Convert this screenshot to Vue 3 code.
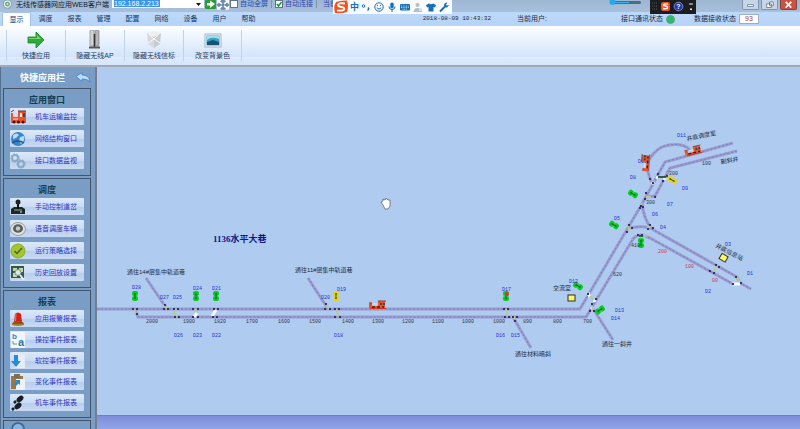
<script setup>
import { ref } from 'vue'

const tabs = ['显示', '调度', '报表', '管理', '配置', '网络', '设备', '用户', '帮助']
const activeTab = ref('显示')
const address = ref('192.168.2.213')
const autoFull = ref(false)
const autoConnect = ref(true)
const received = ref('93')

const ribbon = [
  { label: '快捷应用', icon: 'arrow' },
  { label: '隐藏无线AP', icon: 'ap' },
  { label: '隐藏无线信标', icon: 'cube' },
  { label: '改变背景色', icon: 'image' }
]

const panels = [
  {
    title: '应用窗口',
    items: [
      { label: '机车运输监控', icon: 'loco' },
      { label: '网络结构窗口', icon: 'globe' },
      { label: '接口数据监视', icon: 'gears' }
    ]
  },
  {
    title: '调度',
    items: [
      { label: '手动控制道岔', icon: 'joystick' },
      { label: '语音调度车辆', icon: 'speaker' },
      { label: '运行策略选择', icon: 'check' },
      { label: '历史回放设置', icon: 'history' }
    ]
  },
  {
    title: '报表',
    dense: true,
    items: [
      { label: '应用报警报表', icon: 'alarm' },
      { label: '操控事件报表', icon: 'letters' },
      { label: '软控事件报表', icon: 'download' },
      { label: '变化事件报表', icon: 'paste' },
      { label: '机车事件报表', icon: 'steps' }
    ]
  }
]

const tracks = [
  'M97 309H580L642 204L665 162L733 143',
  'M135 309L138 317H586L633 239Q636 235 643 235L650 238L733 284',
  'M737 151L670 168L655 196L646 197',
  'M628 229Q638 225 650 228L737 277L740 283L751 289',
  'M642 204Q644 219 651 228',
  'M652 183Q645 169 649 160Q656 147 669 145Q684 143 690 150',
  'M146 278L167 309',
  'M308 278L328 309',
  'M513 317L531 348',
  'M592 307L613 340'
]

const crossings = [
  { d: 'M134 309L136 313', c: 'olive' },
  { d: 'M163 305L168 309', c: 'olive' },
  { d: 'M176 309L174 313L177 317', c: 'olive' },
  { d: 'M195 309L197 313', c: 'olive' },
  { d: 'M197 313L194 317', c: 'white' },
  { d: 'M216 310L212 316', c: 'white' },
  { d: 'M325 304L329 309', c: 'olive' },
  { d: 'M336 309L339 317', c: 'olive' },
  { d: 'M506 309L508 317', c: 'olive' },
  { d: 'M511 317L514 317L514 319', c: 'olive' },
  { d: 'M588 293L590 297M594 299L595 302M591 307L593 309', c: 'white' },
  { d: 'M590 296L594 300M592 307L594 311', c: 'olive' },
  { d: 'M642 203L641 206M646 197L651 197M651 182L652 184', c: 'olive' },
  { d: 'M628 226L629 230L633 228M647 228L651 226M642 235L647 236', c: 'olive' },
  { d: 'M656 177L658 178M664 177L665 180M652 182L654 184', c: 'white' },
  { d: 'M717 265L714 272M737 277L740 283', c: 'olive' },
  { d: 'M732 284L740 284', c: 'white' }
]

const joints = [
  [133, 309], [137, 309], [137, 314], [164, 309], [168, 309], [165, 305], [174, 309], [178, 309], [175, 317], [179, 317],
  [193, 309], [198, 309], [193, 317], [198, 317], [214, 309], [218, 309], [213, 317], [217, 317],
  [325, 309], [330, 309], [326, 304], [335, 309], [339, 309], [335, 317], [340, 317],
  [504, 309], [508, 309], [505, 317], [509, 317], [513, 317], [517, 317], [515, 321],
  [588, 294], [596, 299], [592, 304], [594, 311], [590, 311],
  [641, 206], [646, 193], [645, 199], [655, 197], [650, 179], [653, 183], [658, 174], [663, 181], [667, 176],
  [627, 232], [629, 225], [632, 228], [648, 229], [653, 228], [650, 225], [640, 208], [643, 207],
  [638, 235], [642, 235], [716, 265], [719, 267], [710, 271], [714, 273], [736, 277], [741, 283], [733, 284]
]

const signals = [
  { x: 135, y: 296, r: 0, c: 'clear' }, { x: 196, y: 296, r: 0, c: 'clear' }, { x: 216, y: 296, r: 0, c: 'clear' },
  { x: 336, y: 296, r: 0, c: 'warn' }, { x: 506, y: 296, r: 0, c: 'clear', alert: true },
  { x: 578, y: 286, r: 120, c: 'clear' }, { x: 600, y: 310, r: 55, c: 'clear' }, { x: 641, y: 243, r: 0, c: 'clear' },
  { x: 614, y: 225, r: 120, c: 'clear' }, { x: 633, y: 194, r: 120, c: 'clear' }, { x: 672, y: 180, r: 120, c: 'warn' }
]

const switches = [
  ['D28', 132, 289], ['D27', 160, 299], ['D25', 173, 299], ['D24', 193, 290], ['D21', 212, 290],
  ['D26', 174, 337], ['D23', 193, 337], ['D22', 212, 337], ['D20', 321, 299], ['D19', 337, 291], ['D18', 334, 337],
  ['D17', 502, 291], ['D16', 496, 337], ['D15', 511, 337], ['D12', 569, 283], ['D13', 615, 312], ['D14', 611, 320],
  ['D11', 677, 137], ['D10', 638, 163], ['D8', 630, 179], ['D9', 682, 190], ['D7', 667, 206], ['D6', 652, 216],
  ['D5', 614, 220], ['D4', 660, 229], ['D3', 725, 246], ['D1', 747, 275], ['D2', 705, 293]
]

const distances = [
  ['2000', 146, 323], ['1900', 183, 323], ['1820', 214, 323], ['1700', 246, 323], ['1600', 278, 323], ['1500', 309, 323],
  ['1400', 342, 323], ['1300', 372, 323], ['1200', 402, 323], ['1100', 432, 323], ['1000', 462, 323], ['1000', 493, 323],
  ['890', 523, 323], ['800', 553, 323], ['700', 583, 323], ['620', 613, 276], ['410', 631, 247],
  ['300', 646, 204], ['200', 669, 175], ['100', 702, 165]
]

const redDistances = [['200', 658, 253], ['100', 685, 268], ['00', 712, 282]]

const places = [
  { t: '通往14#层集中轨道巷', x: 127, y: 274, r: 0 }, { t: '通往11#层集中轨道巷', x: 295, y: 272, r: 0 },
  { t: '交流室', x: 553, y: 290, r: 0 }, { t: '通往材料暗斜', x: 515, y: 356, r: 0 }, { t: '通往一斜井', x: 602, y: 346, r: 0 },
  { t: '井底调度室', x: 687, y: 141, r: -12 }, { t: '副斜井', x: 721, y: 164, r: -10 }, { t: '井底信息站', x: 715, y: 247, r: 27 }
]
</script>

<template>
  <div class="app">
    <header class="titlebar">
      <svg class="logo" viewBox="0 0 10 10"><circle cx="5" cy="4" r="4.5" fill="#e8f2ee" stroke="#789a99" /><circle cx="5" cy="4" r="2" fill="none" stroke="#58a27a" stroke-width="1.5" /><path d="M5 4L8 7" stroke="#8aaab4" /></svg>
      <h1>无线传感器网应用WEB客户端</h1>
      <div class="address">
        <input v-model="address" class="address-input" aria-label="地址">
        <button class="plain drop" aria-label="展开"><svg viewBox="0 0 5 3"><path d="M0 0H5L2.500 3Z" fill="#111" /></svg></button>
      </div>
      <button class="plain go" aria-label="连接"><svg viewBox="0 0 11 10"><rect width="11" height="9" rx="1" fill="#2b9b35" /><path d="M2 3H5V0.500L10 4L5 8V5.500H2Z" fill="#f4fff0" /></svg></button>
      <button class="plain full" aria-label="全屏"><svg viewBox="0 0 11 10"><rect width="11" height="9" fill="#6f8ba8" /><path d="M0 4V0H4ZM11 4V0H7ZM0 5V9H4ZM11 5V9H7Z" fill="#fff" /><path d="M1 1L4.500 3.500M10 1L6.500 3.500M1 8L4.500 5.500M10 8L6.500 5.500" stroke="#fff" stroke-width="1.500" /></svg></button>
      <label class="toggle"><input v-model="autoFull" type="checkbox"><span>自动全屏</span></label>
      <label class="toggle"><input v-model="autoConnect" type="checkbox"><svg v-if="autoConnect" class="tick" viewBox="0 0 8 8"><path d="M2 4L3.500 6L6.500 2" fill="none" stroke="#1c9430" stroke-width="1.500" /></svg><span>自动连接</span></label>
      <span class="toggle current">当前</span>
      <div class="window-buttons">
        <button aria-label="最小化"><svg viewBox="0 0 16 8"><rect x="5" y="4" width="6" height="2" fill="#fff" stroke="#596879" stroke-width=".7" /></svg></button>
        <button aria-label="还原"><svg viewBox="0 0 16 8"><path d="M8 1H12V5H8ZM5 3H10V7H5Z" fill="#fff" stroke="#596879" stroke-width=".8" /></svg></button>
        <button class="close" aria-label="关闭"><svg viewBox="0 0 16 8"><path d="M5 1L11 7M11 1L5 7" stroke="#fff" stroke-width="1.800" /></svg></button>
      </div>

      <div class="ime">
        <svg viewBox="0 0 16 14"><path d="M3 2Q8 0 14 0.500Q16 6 14 12Q8 14 2 13Q0 7 3 2Z" fill="#f4511e" /><path d="M12 3.500Q5 2.500 5 5Q5 6.500 8.500 7Q12 7.500 11 9.500Q10 11 4 10.500" fill="none" stroke="#fff" stroke-width="2" /></svg>
        <span class="ime-lang">中</span>
        <svg viewBox="0 0 12 12"><circle cx="3.500" cy="5" r="1.300" fill="none" stroke="#1670b8" /><path d="M8 6.500Q9.500 8 7.500 9.500" fill="none" stroke="#1670b8" stroke-width="1.500" /></svg>
        <svg viewBox="0 0 12 12"><circle cx="6" cy="6" r="4.200" fill="none" stroke="#1670b8" /><path d="M3.800 6.800Q6 9.500 8.200 6.800M4.500 4V5M7.500 4V5" fill="none" stroke="#1670b8" /></svg>
        <svg viewBox="0 0 12 12"><rect x="4.300" y="1.500" width="3.400" height="6" rx="1.700" fill="#1670b8" /><path d="M3 5.500Q3 8.500 6 8.500Q9 8.500 9 5.500M6 8.500V11" fill="none" stroke="#1670b8" /></svg>
        <svg viewBox="0 0 12 12"><rect x="1" y="3" width="10" height="6.500" rx="1" fill="#1670b8" /><path d="M2 5H10M2 6.600H10M3.500 8.200H8.500" stroke="#fff" stroke-width=".7" stroke-dasharray="1 .7" /></svg>
        <svg viewBox="0 0 12 12"><circle cx="5.500" cy="4" r="2" fill="#b5bdc6" /><path d="M1.500 11Q2 6.500 6 7L10 8V11Z" fill="#b5bdc6" /><path d="M7 9H11" stroke="#fff" /></svg>
        <svg viewBox="0 0 12 12"><path d="M4 2.500Q6 4 8 2.500L11 4L10 6.500L8.500 6V10.500H3.500V6L2 6.500L1 4Z" fill="#1670b8" /></svg>
        <svg viewBox="0 0 12 12"><path d="M2 10.500L7 5.500" stroke="#1670b8" stroke-width="2" /><path d="M9.500 1.500Q6 1.500 6 4.500Q6.500 7 9 6.500L11 4L8.500 4.500L8 3.500Z" fill="#1670b8" /></svg>
      </div>
      <svg class="volume" viewBox="0 0 32 6"><rect x="2" y="1" width="30" height="3" rx="1.500" fill="#506a7e" /><path d="M4 2.500H20" stroke="#36b4f0" /><circle cx="3.500" cy="2" r="3" fill="#27a8e8" /></svg>
      <svg class="recorder" viewBox="0 0 46 14"><rect width="46" height="14" fill="#1c1d20" /><path d="M2 3H7M2 6H7M2 9H7" stroke="#555" stroke-dasharray="1 1" /><rect x="11" y="2" width="9" height="9" rx="2" fill="#f4511e" /><path d="M18 4Q13 3.500 13.500 5.500Q18 6 17.500 8Q16 9.500 13 8.500" fill="none" stroke="#fff" stroke-width="1.400" /><circle cx="28.500" cy="6.500" r="4.300" fill="#1934b8" stroke="#c0cbed" stroke-width=".6" /><text x="28.500" y="9" fill="#fff" font-size="7" font-weight="700" text-anchor="middle">?</text><path d="M39 4H43M40 9H42L41 10Z" stroke="#eee" fill="#eee" /></svg>
    </header>

    <div class="menubar">
      <nav class="tabs">
        <button v-for="tab in tabs" :key="tab" :class="{ active: tab === activeTab }" @click="activeTab = tab">{{ tab }}</button>
      </nav>
      <div class="status">
        <time>2018-08-09 10:43:32</time>
        <span class="user">当前用户:</span>
        <span class="link-state">接口通讯状态<i class="lamp"></i></span>
        <label class="receive">数据接收状态<input v-model="received"></label>
      </div>
    </div>

    <div class="ribbon">
      <button v-for="item in ribbon" :key="item.label">
        <svg viewBox="0 0 20 20">
          <g v-if="item.icon === 'arrow'"><path d="M2 7H10V2L18 10L10 18V13H2Z" fill="#2faa39" stroke="#16852a" stroke-width=".8" /><path d="M3 8H11V5L15 9H3Z" fill="#79d568" /></g>
          <g v-else-if="item.icon === 'ap'"><rect x="5" y="0" width="4" height="16" rx="1" fill="#d2d3d3" stroke="#777" stroke-width=".6" /><rect x="10" y="0" width="4" height="16" rx="1" fill="#b5b6b7" stroke="#777" stroke-width=".6" /><path d="M9.500 4V18" stroke="#333" stroke-width="1.500" /><path d="M4 17.500H15" stroke="#555" stroke-width="2" /></g>
          <g v-else-if="item.icon === 'cube'"><path d="M3 3L10 6V18L4 14Z" fill="#d8d9dc" /><path d="M10 6L17 3L16 14L10 18Z" fill="#c9cbd0" /><path d="M3 3L10 1L17 3L10 7Z" fill="#eee" /><path d="M5 4L10 9L15 4M4 13L10 9L16 13" fill="none" stroke="#fafafa" /></g>
          <g v-else><rect x="2" y="4" width="16" height="13" fill="#fafafa" stroke="#a2b4c5" /><rect x="3.500" y="5.500" width="13" height="10" fill="#37a2c8" /><path d="M4 10Q8 6 16 9V6H4Z" fill="#a7ddec" /><path d="M4 12L10 10L16 12V15H4Z" fill="#175474" /></g>
        </svg>
        <span>{{ item.label }}</span>
      </button>
    </div>

    <div class="workspace">
      <aside class="sidebar">
        <div class="sidebar-head">
          <h2>快捷应用栏</h2>
          <button class="plain back" aria-label="返回"><svg viewBox="0 0 16 12"><path d="M1 4.500L7 0.500V3Q14 2.500 15 10Q12 6.500 7 7V9.500Z" fill="#b9dcff" stroke="#4d87cf" /></svg></button>
        </div>
        <section v-for="panel in panels" :key="panel.title" class="panel" :class="{ dense: panel.dense }">
          <h3>{{ panel.title }}</h3>
          <button v-for="item in panel.items" :key="item.label">
            <svg viewBox="0 0 16 16">
              <g v-if="item.icon === 'loco'"><path d="M1 4H3V8H8V2H16V14H1Z" fill="#e8542b" /><path d="M1 3L4 1M8 2H16" stroke="#6b3b30" /><rect x="10" y="4" width="2" height="4" fill="#dfe9ee" /><rect x="13" y="4" width="2" height="4" fill="#384b55" /><path d="M3 10H8" stroke="#ffd9c8" /><circle cx="4" cy="13" r="1.500" fill="#3a1714" /><circle cx="8.500" cy="13" r="1.500" fill="#3a1714" /><circle cx="13" cy="13" r="1.500" fill="#3a1714" /></g>
              <g v-else-if="item.icon === 'globe'"><circle cx="8" cy="8" r="7" fill="#3b82c8" /><path d="M3 4Q7 1 9 4L6 7L3 8ZM10 6L14 5Q15 10 11 13L9 10Z" fill="#b8dcf6" /><path d="M2 12Q8 8 14 12" fill="none" stroke="#1c5593" stroke-width="1.500" /></g>
              <g v-else-if="item.icon === 'gears'" fill="none" stroke="#87abc5"><circle cx="5" cy="5" r="3" stroke-width="2" /><circle cx="11" cy="11" r="3" stroke-width="2" /><circle cx="5" cy="5" r="4.300" stroke-width="1" stroke-dasharray="1.500 1.500" /><circle cx="11" cy="11" r="4.300" stroke-width="1" stroke-dasharray="1.500 1.500" /></g>
              <g v-else-if="item.icon === 'joystick'"><path d="M1 10L4 8H12L15 10V15H1Z" fill="#1b2924" /><path d="M8 4V10" stroke="#111" stroke-width="2" /><circle cx="8" cy="3" r="2.500" fill="#202020" /><path d="M4 11H12" stroke="#9ba69f" /><circle cx="11" cy="13" r="1" fill="#aaa" /></g>
              <g v-else-if="item.icon === 'speaker'"><ellipse cx="8" cy="8" rx="7.500" ry="6.500" fill="#e2e2df" stroke="#999" /><ellipse cx="8" cy="7.500" rx="5" ry="4.300" fill="#595d61" /><circle cx="8" cy="7.500" r="2.200" fill="#c5c8cb" /></g>
              <g v-else-if="item.icon === 'check'"><circle cx="8" cy="8" r="7" fill="#a3c62c" stroke="#8aac2b" /><path d="M4.500 8L7 10.500L12 5" fill="none" stroke="#50603a" stroke-width="1.500" /></g>
              <g v-else-if="item.icon === 'history'"><rect x="1" y="1" width="13" height="12" fill="#35574c" /><path d="M3 3H7V6H3ZM9 3H13V7H9ZM3 8H7V12H3Z" fill="#c2dba5" /><circle cx="8" cy="7.500" r="3" fill="#dce9ea" stroke="#888" /><path d="M10 10L14 15" stroke="#eee" stroke-width="2" /></g>
              <g v-else-if="item.icon === 'alarm'"><path d="M4 11L5 3Q8 0 11 3L12 11Z" fill="#d02116" /><path d="M6 3L5.500 10" stroke="#ff7a61" /><path d="M2 12Q8 9 14 12V14Q8 16 2 14Z" fill="#b57922" /><path d="M3 12H13" stroke="#672b13" /></g>
              <g v-else-if="item.icon === 'letters'"><rect x="1" y="0" width="14" height="16" fill="#f2f6fa" /><text x="2" y="7" font-size="8" font-weight="700" fill="#3185bd">b</text><text x="8" y="14" font-size="11" font-weight="700" fill="#2378b7">a</text><path d="M3 9V12H7" fill="none" stroke="#4bb65d" /></g>
              <g v-else-if="item.icon === 'download'"><rect x="5" y="1" width="10" height="14" fill="#e6edf6" /><path d="M4 2H8V8H11L6 14L1 8H4Z" fill="#238ddb" /></g>
              <g v-else-if="item.icon === 'paste'"><rect x="1" y="2" width="12" height="13" fill="#a47547" /><rect x="4" y="0" width="6" height="4" fill="#77705f" /><rect x="6" y="5" width="9" height="11" fill="#edf3fa" /><path d="M5 6H10V11L8.500 9.500L6 12L4 10L6.500 7.500Z" fill="#288bc7" /></g>
              <g v-else fill="#171d24"><ellipse cx="10" cy="4" rx="2.500" ry="4" transform="rotate(50 10 4)" /><ellipse cx="8" cy="11" rx="2.500" ry="4" transform="rotate(50 8 11)" /><path d="M6 6L4 8M4 13L2 15" stroke="#171d24" stroke-width="2.500" /></g>
            </svg>
            <span>{{ item.label }}</span>
          </button>
        </section>
        <section class="panel last"><svg viewBox="0 0 16 16"><circle cx="8" cy="8" r="6" fill="#8bb5dc" stroke="#406c9b" stroke-width="2" /></svg></section>
      </aside>

      <main class="stage">
        <svg class="map" viewBox="97 67 703 348" preserveAspectRatio="xMinYMin meet">
          <defs>
            <g id="loco"><path d="M0 1L3 2V5H9V0H16V7H0Z" fill="#e8542b" /><path d="M1 2H3M9 0H17" stroke="#7b4a40" /><rect x="11" y="2" width="2" height="2" fill="#384b55" /><rect x="14" y="2" width="2" height="2" fill="#344b4b" /><path d="M4 3H8" stroke="#eee1dc" /><path d="M1 7.500H17" stroke="#dc3517" /><path d="M3 6H6M8 6H11M13 6H15" stroke="#421d1a" stroke-width="1.500" /></g>
          </defs>
          <g class="rail"><path v-for="d in tracks" :key="d" :d="d" /></g>
          <g class="ties"><path v-for="d in tracks" :key="d" :d="d" /></g>
          <path v-for="c in crossings" :key="c.d" :d="c.d" :class="['crossing', c.c]" />
          <path d="M658 177H666" class="crossing dark" /><path d="M639 236H643" class="crossing dark" />
          <rect v-for="(j, i) in joints" :key="i" :x="j[0] - 1" :y="j[1] - 1" width="2" height="2" class="joint" />
          <g v-for="(s, i) in signals" :key="i" :transform="`translate(${s.x} ${s.y}) rotate(${s.r})`" :class="s.c">
            <rect x="-3" y="-5" width="6" height="5" rx="2" /><rect x="-3" y="0" width="6" height="5" rx="2" />
            <path d="M0 -3V3M-1 -2H1M-1 2H1" class="signal-core" />
            <circle v-if="s.alert" cx="1" cy="-2" r="2" fill="#f32b22" />
          </g>
          <rect x="568" y="295" width="7" height="6" class="station" />
          <rect x="-4" y="-3" width="7" height="6" class="station" transform="translate(724 258) rotate(30)" />
          <text v-for="s in switches" :key="s[0]" :x="s[1]" :y="s[2]" class="switch">{{ s[0] }}</text>
          <text v-for="(d, i) in distances" :key="i" :x="d[1]" :y="d[2]" class="distance">{{ d[0] }}</text>
          <text v-for="d in redDistances" :key="d[0]" :x="d[1]" :y="d[2]" class="distance red">{{ d[0] }}</text>
          <text v-for="p in places" :key="p.t" :transform="`translate(${p.x} ${p.y}) rotate(${p.r})`" class="place">{{ p.t }}</text>
          <text x="213" y="242" class="map-title">1136水平大巷</text>
          <use href="#loco" transform="translate(369 301)" />
          <use href="#loco" transform="translate(684 149) rotate(-14)" />
          <use href="#loco" transform="translate(641 171) rotate(-86)" />
          <path d="M383 205L381 202L383 201L383 199L385 200L386 198L388 200L390 200L390 206L388 209H385Z" fill="#fff" stroke="#555" stroke-width=".7" />
        </svg>
        <footer class="bottom-strip"></footer>
      </main>
    </div>
  </div>
</template>

<style>
body {
  margin: 0;
  overflow: hidden;
}
</style>

<style scoped>
.app {
  display: flex;
  flex-direction: column;
  height: 100vh;
  overflow: hidden;
  background: #afcbf0;
  color: #1b2940;
  font-family: "Liberation Sans", "Noto Sans CJK SC", sans-serif;
  font-size: 7px;
  line-height: 10px;
}
.app * { box-sizing: border-box; }
svg { display: block; }
button, input { font: inherit; color: inherit; }
h1, h2, h3 { margin: 0; }
button { padding: 0; border: 0; }
.plain { background: none; }

.titlebar {
  position: relative;
  display: flex;
  align-items: flex-start;
  height: 12px;
  padding-left: 3px;
  background: linear-gradient(#9db6d2, #a9c0dc);
}
.logo { width: 9px; height: 10px; margin-right: 4px; }
h1 { width: 96px; font-size: 7px; font-weight: 400; white-space: nowrap; color: #101c2c; }
.address { display: flex; justify-content: space-between; width: 92px; height: 8px; padding-left: 2px; background: #fff; }
.address-input { width: 46px; height: 7px; padding: 0; border: 0; background: #3795ef; color: #fff; line-height: 7px; }
.drop { padding: 2px 3px; }
.drop svg { width: 5px; height: 3px; }
.go { width: 11px; margin-left: 1px; }
.full { width: 12px; margin: 0 1px; }
.toggle { position: relative; display: flex; align-items: center; gap: 2px; height: 8px; margin-right: 3px; padding-right: 3px; border-right: 1px solid #7d93b0; color: #2b45ad; white-space: nowrap; }
.toggle input { appearance: none; width: 8px; height: 8px; margin: 0; border: 1px solid #60738b; background: #fff; }
.tick { position: absolute; top: 0; left: 0; width: 8px; height: 8px; pointer-events: none; }
.current { margin-left: 3px; border: 0; }
.window-buttons { display: flex; gap: 2px; margin: 0 3px 0 auto; }
.window-buttons button { width: 17px; height: 10px; border: 1px solid #8294aa; border-top: 0; border-radius: 0 0 2px 2px; background: #c6d5e7; }
.window-buttons .close { border-color: #80453e; background: #cb5140; }
.ime { position: absolute; z-index: 2; top: 0; left: 333px; display: flex; align-items: center; justify-content: space-between; width: 119px; height: 14px; padding-right: 2px; background: #f9fbfd; }
.ime svg { width: 12px; height: 12px; }
.ime svg:first-child { width: 16px; height: 14px; }
.ime-lang { color: #1670b8; font-size: 9px; font-weight: 700; }
.volume { position: absolute; top: 0; left: 609px; width: 32px; height: 6px; }
.recorder { position: absolute; z-index: 2; top: 0; left: 650px; width: 46px; height: 14px; }

.menubar { display: flex; justify-content: space-between; height: 14px; background: linear-gradient(#bed9fb, #b5d3f8); }
.tabs { display: flex; padding-left: 2px; }
.tabs button { width: 29px; background: none; color: #16365f; }
.tabs .active { border: 1px solid #a6c2e3; border-bottom: 0; border-radius: 2px 2px 0 0; background: #fafdff; }
.status { display: flex; align-items: center; padding-right: 41px; white-space: nowrap; }
time { margin-right: 26px; font-family: "Liberation Mono", monospace; font-size: 6px; }
.user { margin-right: 74px; }
.link-state, .receive { display: flex; align-items: center; }
.link-state { margin-right: 19px; }
.lamp { width: 9px; height: 9px; margin-left: 3px; border: 1px solid #6e9f62; border-radius: 50%; background: #23bd78; }
.receive input { width: 20px; height: 10px; margin-left: 3px; padding: 0; border: 1px solid #9caec4; background: #fff; color: #98453c; text-align: center; }

.ribbon { display: flex; height: 41px; padding: 4px 6px 3px; border-bottom: 2px solid #a3a9b4; background: linear-gradient(#fcfeff, #d3e4fc 31px, #dfebfc 31px, #d5e5fb); }
.ribbon button { display: flex; flex-direction: column; align-items: center; gap: 1px; width: 59px; height: 31px; border-left: 1px solid #c2d2e5; background: none; color: #263b5d; white-space: nowrap; }
.ribbon button:last-child { border-right: 1px solid #c2d2e5; }
.ribbon svg { flex: none; width: 20px; height: 20px; }

.workspace { display: flex; flex: 1; min-height: 0; }
.sidebar { display: flex; flex-direction: column; flex: none; gap: 2px; width: 97px; padding: 0 4px 0 2px; overflow: hidden; border-right: 2px solid #777d8c; border-left: 1px solid #56718f; background: #7a9dc5; }
.sidebar-head { display: flex; align-items: center; justify-content: space-between; flex: none; height: 19px; padding: 2px 0 0 17px; }
h2 { color: #fff; font-size: 9px; font-weight: 700; }
.back svg { width: 16px; height: 12px; }
.panel { display: flex; flex: none; flex-direction: column; gap: 5px; padding: 0 6px 6px; border: 1px solid #43536a; }
.dense { gap: 4px; }
.dense h3 { margin-bottom: -4px; }
h3 { height: 19px; margin-bottom: -5px; padding-top: 4px; color: #123f50; font-size: 9px; line-height: 14px; text-align: center; }
.panel button { display: flex; align-items: center; height: 17px; padding-right: 7px; border-radius: 1px; background: linear-gradient(#dce9fa, #cadbf4 50%, #b7cded 51%, #c8daf4); color: #2a35bd; }
.panel button svg { width: 16px; height: 16px; }
.panel button span { margin-left: auto; white-space: nowrap; }
.last { height: 60px; }
.last svg { width: 16px; height: 16px; }

.stage { display: flex; flex: 1; flex-direction: column; min-width: 0; }
.map { flex: 1; width: 100%; min-height: 0; }
.bottom-strip { height: 14px; border-top: 1px solid #6f7fb9; background: linear-gradient(#7f8cda, #91a6e8); }
.rail path { fill: none; stroke: #9a9dd0; stroke-width: 3; }
.ties path { fill: none; stroke: #7d7cb8; stroke-width: 1; stroke-dasharray: 2 2; }
.crossing { fill: none; stroke-width: 2; }
.olive { stroke: #b6c996; }
.white { stroke: #f7fbff; stroke-width: 3; }
.dark { stroke: #315e42; }
.joint { fill: #392f70; }
.clear { fill: #00cf21; }
.warn { fill: #f0d016; }
.signal-core { fill: none; stroke: #2b6a24; stroke-width: 1; }
.station { fill: #fff568; stroke: #2e3021; stroke-width: 1; }
.switch, .distance { font-family: "Liberation Mono", monospace; font-size: 5px; }
.switch { fill: #2334d1; }
.distance { fill: #303747; }
.red { fill: #d13c4c; }
.place { fill: #1d2736; font-size: 6px; }
.map-title { fill: #141486; font-family: "Liberation Serif", "Noto Sans CJK SC", serif; font-size: 9px; font-weight: 700; }
</style>
